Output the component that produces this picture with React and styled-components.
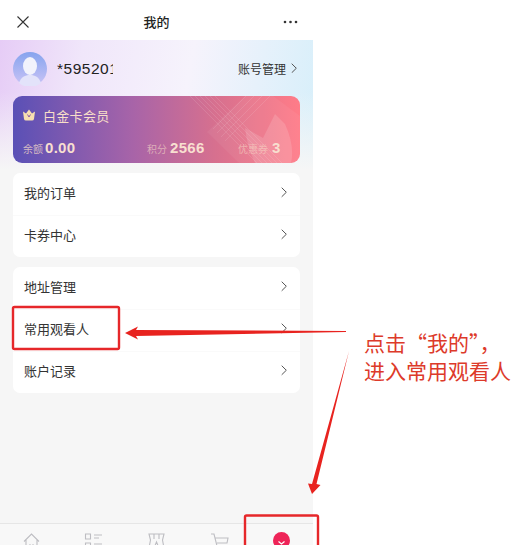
import React from 'react';
import styled, { createGlobalStyle } from 'styled-components';

const Global = createGlobalStyle`
  html, body { margin: 0; padding: 0; background: #fff; }
  body { font-family: 'Liberation Sans', 'Noto Sans CJK SC', sans-serif; }
`;

const Page = styled.div`
  position: relative;
  width: 530px;
  height: 545px;
  overflow: hidden;
  background: #fff;
`;

const Phone = styled.div`
  width: 313px;
  height: 545px;
  display: flex;
  flex-direction: column;
  background: #f6f6f6;
`;

const NavBar = styled.div`
  height: 40px;
  flex: none;
  display: flex;
  align-items: center;
  justify-content: space-between;
  padding: 3px 15px 0 16px;
  box-sizing: border-box;
  background: #fff;
`;

const NavTitle = styled.div`
  font-size: 13px;
  color: #222;
  font-weight: 500;
`;

const Hero = styled.div`
  height: 130px;
  flex: none;
  padding: 0 13px;
  box-sizing: border-box;
  background:
    linear-gradient(180deg, rgba(246, 246, 246, 0) 40%, #f6f6f6 100%),
    linear-gradient(100deg, #e6ccf6 0%, #f0e6fa 25%, #f6f3fc 58%, #d6effa 100%);
`;

const Profile = styled.div`
  height: 56px;
  display: flex;
  align-items: center;
  gap: 10px;
  padding-top: 2px;
  box-sizing: border-box;
`;

const Avatar = styled.svg`
  width: 34px;
  height: 34px;
  flex: none;
`;

const UserName = styled.div`
  width: 56px;
  overflow: hidden;
  white-space: nowrap;
  font-size: 15.5px;
  letter-spacing: 0.5px;
  color: #222;
`;

const Account = styled.div`
  margin-left: auto;
  display: flex;
  align-items: center;
  gap: 5px;
  padding: 0 3px 2px 0;
  font-size: 12px;
  color: #333;
`;

const Card = styled.div`
  position: relative;
  height: 67px;
  border-radius: 9px;
  overflow: hidden;
  padding: 9px 9px 0;
  box-sizing: border-box;
  background: linear-gradient(90deg, #5a50b6 0%, #a864a8 42%, #d6708f 70%, #ff7c88 100%);
`;

const CardArt = styled.svg`
  position: absolute;
  left: 150px;
  top: 0;
  width: 137px;
  height: 67px;
`;

const Tier = styled.div`
  position: relative;
  display: flex;
  align-items: center;
  gap: 7px;
  height: 20px;
  font-size: 13px;
  letter-spacing: 0.3px;
  color: #f8dfc8;
`;

const Stats = styled.div`
  position: relative;
  display: grid;
  grid-template-columns: 124px 91px 1fr;
  margin-top: 14px;
  padding-left: 1px;
  align-items: baseline;
`;

const Stat = styled.div`
  display: flex;
  align-items: baseline;
  gap: ${(p) => p.$gap}px;
  white-space: nowrap;
`;

const StatLabel = styled.span`
  font-size: 10px;
  color: rgba(248, 223, 200, ${(p) => p.$alpha});
`;

const StatValue = styled.span`
  font-size: 15px;
  font-weight: 700;
  letter-spacing: 0.3px;
  color: #f8dfd0;
`;

const Lists = styled.div`
  padding: 3px 13px 0;
  display: flex;
  flex-direction: column;
  gap: 10px;
`;

const List = styled.div`
  background: #fff;
  border-radius: 7px;
`;

const Row = styled.div`
  height: 42px;
  display: flex;
  align-items: center;
  justify-content: space-between;
  padding: 0 13px 3px 11px;
  box-sizing: border-box;
  font-size: 13px;
  color: #333;
  & + & { box-shadow: inset 0 1px 0 #fafafa; }
`;

const Spacer = styled.div`
  flex: 1;
`;

const TabBar = styled.div`
  height: 22px;
  flex: none;
  display: grid;
  grid-template-columns: repeat(5, 1fr);
  box-sizing: border-box;
  border-top: 1px solid #e6e6e6;
  background: #f8f8f8;
  overflow: hidden;
`;

const Tab = styled.div`
  display: flex;
  justify-content: center;
  padding-top: 8px;
`;

const Overlay = styled.svg`
  position: absolute;
  left: 0;
  top: 0;
  width: 530px;
  height: 545px;
  pointer-events: none;
`;

const Callout = styled.div`
  position: absolute;
  left: 364px;
  top: 328px;
  font-family: 'Noto Sans CJK SC', sans-serif;
  font-size: 21px;
  line-height: 28px;
  color: #dd3a2a;
  white-space: nowrap;
`;

const Chevron = ({ size = 6, color = '#555' }) => (
  <svg width={size} height={size * 1.75} viewBox="0 0 6 10.5" fill="none">
    <path d="M.7.7 5.3 5.25.7 9.8" stroke={color} strokeWidth="1" />
  </svg>
);

const groups = [
  ['我的订单', '卡券中心'],
  ['地址管理', '常用观看人', '账户记录'],
];

const tabIcons = [
  <path key="home" d="M2 9.5 9.5 2 17 9.5M4 8v10h11V8M7.5 12.5 9.5 14l2-1.5" />,
  <path key="list" d="M1.5 2h5v5h-5zM10 3h8M10 6h5M1.5 11h5v5h-5zM10 12h8M10 15h5" />,
  <path key="ticket" d="M2 2h15l-1.5 6 1.5 8h-5l-2.5-6-2.5 6H2l1.5-8zM7 2v5M12 2v5" />,
  <path key="cart" d="M1 2h3l3 12h10M5 6h13l-1 5H7" />,
];

export default function App() {
  return (
    <Page>
      <Global />
      <Phone>
        <NavBar>
          <svg width="14" height="14" viewBox="0 0 14 14" fill="none">
            <path d="M1.5 1.5 12.5 12.5M12.5 1.5 1.5 12.5" stroke="#333" strokeWidth="1.1" />
          </svg>
          <NavTitle>我的</NavTitle>
          <svg width="15" height="4" viewBox="0 0 15 4" fill="#333">
            <circle cx="2" cy="2" r="1.3" />
            <circle cx="7.5" cy="2" r="1.3" />
            <circle cx="13" cy="2" r="1.3" />
          </svg>
        </NavBar>
        <Hero>
          <Profile>
            <Avatar viewBox="0 0 34 34">
              <defs>
                <linearGradient id="ava" x1="0" y1="0" x2="0" y2="1">
                  <stop offset="0" stopColor="#86a4ee" />
                  <stop offset="1" stopColor="#cbc4f6" />
                </linearGradient>
              </defs>
              <circle cx="17" cy="17" r="17" fill="url(#ava)" />
              <ellipse cx="17" cy="14" rx="7" ry="9" fill="#f2f3fc" />
              <path d="M6 31c2-6 6-8 11-8s9 2 11 8a17 17 0 0 1-22 0z" fill="#e3e3fa" />
            </Avatar>
            <UserName>*595201</UserName>
            <Account>
              账号管理
              <Chevron />
            </Account>
          </Profile>
          <Card>
            <CardArt viewBox="0 0 137 67" fill="none">
              <path d="M44 36 76 67H137V20L110 0H82z" fill="#fff" opacity=".05" />
              <g stroke="#fff" strokeOpacity=".14" strokeWidth=".8">
                <path d="M27 0 94 67M32 0 99 67M37 0 104 67M42 0 109 67M47 0 114 67M52 0 119 67" />
                <path d="M50 33 83 0M54 37 91 0M58 41 99 0M62 45 107 0" />
              </g>
              <path d="M82 32 100 42 112 18 122 28Q132 50 128 67H92Q84 50 82 32z" fill="#fff" opacity=".14" />
            </CardArt>
            <Tier>
              <svg width="14" height="12" viewBox="0 0 14 12">
                <path d="M1 2.500 4 4.500 7 .5l3 4 3-2-1 7.500a2 2 0 0 1-2 1.500H4A2 2 0 0 1 2 10z" fill="#f8dfb0" />
                <path d="M5.500 5.500 7 8l1.500-2.500" stroke="#8a5aa8" strokeWidth="1" fill="none" />
              </svg>
              白金卡会员
            </Tier>
            <Stats>
              <Stat $gap={2}>
                <StatLabel $alpha={0.75}>余额</StatLabel>
                <StatValue>0.00</StatValue>
              </Stat>
              <Stat $gap={3}>
                <StatLabel $alpha={0.6}>积分</StatLabel>
                <StatValue>2566</StatValue>
              </Stat>
              <Stat $gap={4}>
                <StatLabel $alpha={0.55}>优惠券</StatLabel>
                <StatValue>3</StatValue>
              </Stat>
            </Stats>
          </Card>
        </Hero>
        <Lists>
          {groups.map((rows) => (
            <List key={rows[0]}>
              {rows.map((label) => (
                <Row key={label}>
                  {label}
                  <Chevron />
                </Row>
              ))}
            </List>
          ))}
        </Lists>
        <Spacer />
        <TabBar>
          {tabIcons.map((icon, i) => (
            <Tab key={i}>
              <svg width="19" height="19" viewBox="0 0 19 19" fill="none" stroke="#bdbdc2" strokeWidth="1.1">
                {icon}
              </svg>
            </Tab>
          ))}
          <Tab>
            <svg width="17" height="17" viewBox="0 0 17 17">
              <circle cx="8.5" cy="8.5" r="8.5" fill="#ee2458" />
              <path d="M5.500 9.500 8.500 12l3-2.500" stroke="#fff" strokeWidth="1.2" fill="none" />
            </svg>
          </Tab>
        </TabBar>
      </Phone>
      <Overlay viewBox="0 0 530 545" fill="none">
        <rect x="13" y="307" width="106" height="42" rx="1.5" stroke="#e6272a" strokeWidth="2.4" />
        <rect x="245" y="515.500" width="73" height="40" rx="1.5" stroke="#e6272a" strokeWidth="2.4" />
        <path d="M125 333 138 326.500 136 330 346 331V332L136 336 138 339.500z" fill="#e8231f" />
        <path d="M349 351 316.500 484 320.500 485 312 494 308 483.500 312 484z" fill="#e8231f" />
      </Overlay>
      <Callout>
        点击“我的”，
        <br />
        进入常用观看人
      </Callout>
    </Page>
  );
}
